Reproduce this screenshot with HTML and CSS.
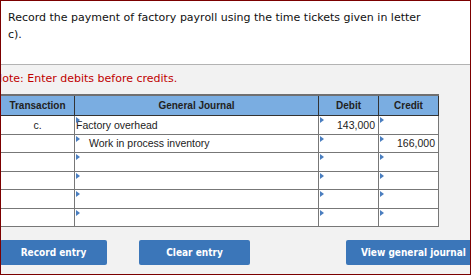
FILE: index.html
```html
<!DOCTYPE html>
<html>
<head>
<meta charset="utf-8">
<link rel="stylesheet" href="styles.css">
</head>
<body>
<div class="frame">
  <div class="question">
    <p>Record the payment of factory payroll using the time tickets given in letter c).</p>
  </div>
  <div class="work">
    <p class="note">Note: Enter debits before credits.</p>
    <table class="journal">
      <colgroup>
        <col class="c-tr"><col class="c-gj"><col class="c-dr"><col class="c-cr">
      </colgroup>
      <thead>
        <tr><th>Transaction</th><th>General Journal</th><th>Debit</th><th>Credit</th></tr>
      </thead>
      <tbody>
        <tr><td class="tr">c.</td><td class="in"><span class="mark"></span>Factory overhead</td><td class="in num"><span class="mark"></span>143,000</td><td class="in num"><span class="mark"></span></td></tr>
        <tr><td class="tr"></td><td class="in"><span class="mark"></span><span class="indent">Work in process inventory</span></td><td class="in num"><span class="mark"></span></td><td class="in num"><span class="mark"></span>166,000</td></tr>
        <tr><td class="tr"></td><td class="in"><span class="mark"></span></td><td class="in num"><span class="mark"></span></td><td class="in num"><span class="mark"></span></td></tr>
        <tr><td class="tr"></td><td class="in"><span class="mark"></span></td><td class="in num"><span class="mark"></span></td><td class="in num"><span class="mark"></span></td></tr>
        <tr><td class="tr"></td><td class="in"><span class="mark"></span></td><td class="in num"><span class="mark"></span></td><td class="in num"><span class="mark"></span></td></tr>
        <tr><td class="tr"></td><td class="in"><span class="mark"></span></td><td class="in num"><span class="mark"></span></td><td class="in num"><span class="mark"></span></td></tr>
      </tbody>
    </table>
    <div class="actions">
      <button class="btn btn-record">Record entry</button>
      <button class="btn btn-clear">Clear entry</button>
      <button class="btn btn-view">View general journal</button>
    </div>
  </div>
</div>
</body>
</html>
```
FILE: styles.css
```css
html, body {
  margin: 0;
  padding: 0;
  background: #ffffff;
}
.frame {
  width: 471px;
  height: 275px;
  box-sizing: border-box;
  border: 1px solid #7b0000;
  overflow: hidden;
  background: #f2f2f2;
  display: flex;
  flex-direction: column;
}
.question {
  background: #ffffff;
  height: 64px;
  flex: none;
  border-bottom: 1px solid #b3b3b3;
  padding: 8px 0 0 7px;
  box-sizing: border-box;
}
.question p {
  margin: 0;
  width: 420px;
  font-family: "DejaVu Sans", Verdana, sans-serif;
  font-size: 11px;
  line-height: 17px;
  color: #111111;
}
.work {
  flex: 1;
  display: flex;
  flex-direction: column;
  margin-left: -1px;
}
.note {
  margin: 7px 0 0 -6px;
  font-family: "DejaVu Sans", Verdana, sans-serif;
  font-size: 11px;
  line-height: 14px;
  color: #c00000;
  white-space: nowrap;
}
.journal {
  margin-top: 8px;
  border-collapse: collapse;
  table-layout: fixed;
  width: 438px;
  font-family: "Liberation Sans", Arial, sans-serif;
  font-size: 10.5px;
  background: #ffffff;
}
.c-tr { width: 74px; }
.c-gj { width: 244px; }
.c-dr { width: 60px; }
.c-cr { width: 60px; }
.journal th {
  background: #7aade1;
  color: #222222;
  font-weight: bold;
  font-size: 10px;
  height: 19px;
  padding: 0;
  border: 1px solid #333333;
  border-top: 2px solid #707070;
}
.journal td {
  height: 17.5px;
  padding: 0;
  border: 1px solid #777777;
  color: #222222;
  position: relative;
}
.journal td.tr {
  text-align: center;
}
.journal td.in {
  padding-left: 1px;
}
.journal td.num {
  text-align: right;
  padding-right: 3px;
}
.indent {
  padding-left: 13px;
}
.mark {
  position: absolute;
  left: 1px;
  top: 1px;
  width: 0;
  height: 0;
  border-top: 3px solid transparent;
  border-bottom: 3px solid transparent;
  border-left: 4px solid #4a7ebf;
}
.actions {
  display: flex;
  margin-top: 13px;
}
.btn {
  flex: none;
  height: 25px;
  border: none;
  border-radius: 2px;
  background: #3b76b9;
  color: #ffffff;
  font-family: "DejaVu Sans Condensed", "DejaVu Sans", Verdana, sans-serif;
  font-stretch: condensed;
  font-weight: bold;
  font-size: 10px;
  white-space: nowrap;
  padding: 0;
}
.btn-record {
  width: 107px;
}
.btn-clear {
  width: 111px;
  margin-left: 32px;
}
.btn-view {
  width: 136px;
  margin-left: 96px;
  text-align: left;
  padding-left: 15px;
}
```
